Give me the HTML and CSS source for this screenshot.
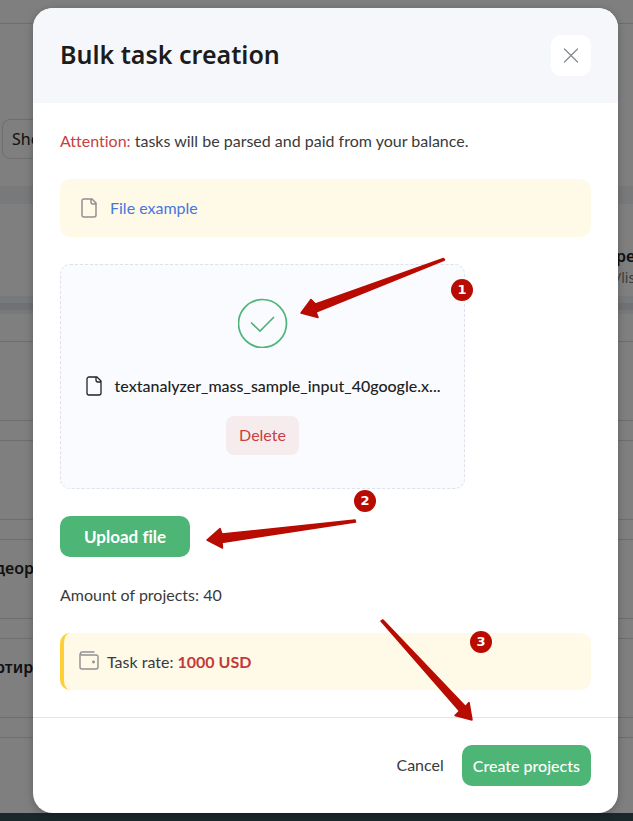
FILE: index.html
```html
<!DOCTYPE html>
<html lang="en">
<head>
<meta charset="utf-8">
<meta name="viewport" content="width=device-width, initial-scale=1">
<title>Bulk task creation</title>
<link rel="stylesheet" href="styles.css">
</head>
<body>
<div class="page">
  <header class="page-top"></header>
  <div class="page-filters"><button class="page-show" type="button">Show</button></div>
  <div class="page-band"></div>
  <div class="page-project">
    <div class="page-site"><b>ре</b><span>/lis</span></div>
  </div>
  <div class="page-divider"></div>
  <div class="page-cards">
    <div class="page-card"></div>
    <div class="page-card"></div>
    <div class="page-card"><b>деор</b></div>
    <div class="page-card"><b>ртир</b></div>
    <div class="page-card"></div>
  </div>
  <footer class="page-footer"></footer>
</div>

<div class="overlay">
  <section class="modal" role="dialog" aria-modal="true" aria-labelledby="modal-title">
    <header class="modal-head">
      <h1 id="modal-title">Bulk task creation</h1>
      <button class="close" type="button" aria-label="Close">
        <svg width="16" height="16" viewBox="0 0 16 16" fill="none" stroke="#85878f" stroke-width="1.2" stroke-linecap="round"><path d="M1.500 1l13 13M14.500 1l-13 13"/></svg>
      </button>
    </header>
    <div class="modal-body">
      <p class="note"><span class="danger">Attention:</span> tasks will be parsed and paid from your balance.</p>
      <div class="notice">
        <svg class="file-icon muted" width="18" height="20" viewBox="0 0 18 20" fill="none" stroke="currentColor" stroke-width="1.500" stroke-linejoin="round"><path d="M12 1H4a2 2 0 0 0-2 2v14a2 2 0 0 0 2 2h10a2 2 0 0 0 2-2V5l-4-4zM11 1v3a2 2 0 0 0 2 2h3"/></svg>
        <a href="#">File example</a>
      </div>
      <div class="dropzone">
        <svg class="check" width="50" height="50" viewBox="0 0 50 50" fill="none" stroke="#50b47a"><circle cx="24.500" cy="25.500" r="24" stroke-width="1.7"/><path d="M13.500 25l8.500 8L35.500 19.500" stroke-width="1.700" stroke-linecap="round" stroke-linejoin="miter"/></svg>
        <div class="file-row">
          <svg class="file-icon" width="18" height="20" viewBox="0 0 18 20" fill="none" stroke="currentColor" stroke-width="1.300" stroke-linejoin="round"><path d="M12 1H4a2 2 0 0 0-2 2v14a2 2 0 0 0 2 2h10a2 2 0 0 0 2-2V5l-4-4zM11 1v3a2 2 0 0 0 2 2h3"/></svg>
          <span class="file-name">textanalyzer_mass_sample_input_40google.x...</span>
        </div>
        <button class="delete" type="button">Delete</button>
      </div>
      <button class="upload" type="button">Upload file</button>
      <p class="amount">Amount of projects: 40</p>
      <div class="rate">
        <svg width="20" height="21" viewBox="0 0 20 21" fill="none" stroke="#909090" stroke-width="1.400" stroke-linecap="round"><path d="M1 3V16a2 2 0 0 0 2 2h14a2 2 0 0 0 2-2V6a2 2 0 0 0-2-2H3a1.400 1.400 0 0 1 0-3h12"/><circle cx="14.500" cy="11" r=".7" fill="#909090"/></svg>
        <span>Task rate: <strong>1000 USD</strong></span>
      </div>
    </div>
    <footer class="modal-foot">
      <button class="cancel" type="button">Cancel</button>
      <button class="create" type="button">Create projects</button>
    </footer>
  </section>
</div>

<svg class="arrows" width="633" height="821" viewBox="0 0 633 821" fill="#b80b02" stroke="#b80b02" stroke-linejoin="round" aria-hidden="true">
  <path stroke-width="1.500" d="M301 313L311 299.500L315.500 304L443.500 258.500L444.500 260L316 312L318 317.500Z"/>
  <path stroke-width="1.500" d="M207 540L220 528.500L222 534L355 520L355.500 522L222 542.500L222.500 548Z"/>
  <path stroke-width="1.500" d="M381 621L383 620L465.500 706.500L469 702.500L472 720L455 715.500L459.500 711Z"/>
</svg>
<span class="badge badge-one">1</span>
<span class="badge badge-two">2</span>
<span class="badge badge-three">3</span>
</body>
</html>
```

FILE: styles.css
```css
* { box-sizing: border-box; }

body {
  margin: 0;
  font: 16px/24px Lato, "Noto Sans", sans-serif;
  font-variant-ligatures: none;
  color: #3a3a3a;
  position: relative;
  min-height: 100vh;
}

h1, p { margin: 0; }

button {
  font: inherit;
  border: 0;
  cursor: pointer;
}

svg { flex: none; }

/* Page behind the dialog */
.page {
  display: flex;
  flex-direction: column;
  min-height: 100vh;
  background: #fff;
  color: #222;
  font-family: "Noto Sans", sans-serif;
  overflow: hidden;
}

.page-top { height: 24px; border-bottom: 1px solid #dcdcdc; }
.page-filters { height: 162px; padding: 95px 2px 0; }

.page-show {
  height: 40px;
  padding: 0 9px;
  border: 1px solid #dcdcdc;
  border-radius: 8px;
  background: #fff;
  color: #222;
}

.page-band { height: 18px; background: #f0f2f6; }
.page-project { height: 92px; padding-top: 42px; }

.page-site {
  display: flex;
  flex-direction: column;
  align-items: flex-start;
  width: 17px;
  margin-left: auto;
  line-height: 21px;
}

.page b { font-size: 16px; font-weight: 600; }
.page-site span { font-size: 14px; color: #777; }

.page-divider {
  height: 18px;
  border: solid #f0f2f6;
  border-width: 7px 0 4px;
  background: #dfe3eb;
}

.page-cards {
  display: grid;
  align-content: start;
  gap: 19px;
  flex: 1 0 0;
  min-height: 0;
  padding-top: 27px;
  overflow: hidden;
}

.page-card {
  display: flex;
  align-items: center;
  height: 80px;
  padding-bottom: 22px;
  border: solid #dcdcdc;
  border-width: 1px 0;
}

.page-card b { margin-left: -5px; }
.page-footer { height: 8px; background: #345059; }

/* Dialog */
.overlay {
  position: absolute;
  inset: 0;
  padding: 8px 15px 8px 33px;
  background: rgb(0 0 0 / 50%);
}

.modal {
  display: flex;
  flex-direction: column;
  min-height: 100%;
  border-radius: 20px;
  background: #fff;
  box-shadow: 0 2px 8px rgb(0 0 0 / 25%);
  overflow: hidden;
}

.modal-head {
  display: flex;
  align-items: flex-start;
  justify-content: space-between;
  padding: 27px;
  background: #f5f7fb;
}

h1 {
  font: 600 25px/38px "Noto Sans", sans-serif;
  color: #1c1c1c;
}

.close {
  display: grid;
  place-items: center;
  width: 40px;
  height: 41px;
  padding: 0;
  border-radius: 10px;
  background: #fff;
}

.modal-body {
  flex: 1;
  display: flex;
  flex-direction: column;
  align-items: flex-start;
  padding: 26px 27px 0;
}

.danger { color: #c8403f; }

.notice, .rate {
  display: flex;
  align-items: center;
  width: 100%;
  border-radius: 10px;
  background: #fff9e8;
}

.notice {
  gap: 12px;
  height: 58px;
  margin-top: 26px;
  padding: 0 20px;
}

.notice a { color: #4477dd; text-decoration: none; }
.file-icon { color: #222; }
.muted { color: #909090; }

.dropzone {
  display: flex;
  flex-direction: column;
  align-items: center;
  width: 405px;
  max-width: 100%;
  margin-top: 27px;
  padding: 33px 20px;
  border: 1px dashed #dfe1ea;
  border-radius: 10px;
  background: #fafbfe;
}

.file-row {
  display: flex;
  align-items: center;
  gap: 12px;
  margin-top: 26px;
  color: #222;
  font-weight: 500;
}

.delete {
  height: 39px;
  margin-top: 18px;
  padding: 0 13px 2px;
  border-radius: 8px;
  background: #f7eced;
  color: #c8403f;
}

.upload, .create {
  height: 41px;
  border-radius: 10px;
  background: #4db575;
  color: #fff;
}

.upload {
  margin-top: 27px;
  padding: 0 24px;
  font-size: 17px;
  font-weight: 700;
}

.amount { margin-top: 26px; }

.rate {
  gap: 8px;
  height: 57px;
  margin-top: 26px;
  padding: 0 15px;
  border-left: 4px solid #ffd036;
}

.rate strong { color: #c23a38; font-weight: 700; }

.modal-foot {
  display: flex;
  align-items: center;
  justify-content: flex-end;
  gap: 18px;
  padding: 27px;
  border-top: 1px solid #e4e4e6;
}

.cancel { padding: 0 0 2px; background: none; color: #3a3a3a; }
.create { padding: 0 11px; font-weight: 500; }

/* Step markers */
.arrows { position: absolute; top: 0; left: 0; }

.badge {
  position: absolute;
  width: 22px;
  height: 22px;
  border-radius: 50%;
  background: #b80b02;
  color: #fff;
  font: 700 13px/22px "DejaVu Sans", sans-serif;
  text-align: center;
}

.badge-one { top: 279px; left: 451px; }
.badge-two { top: 490px; left: 354px; }
.badge-three { top: 631px; left: 470px; }
```
